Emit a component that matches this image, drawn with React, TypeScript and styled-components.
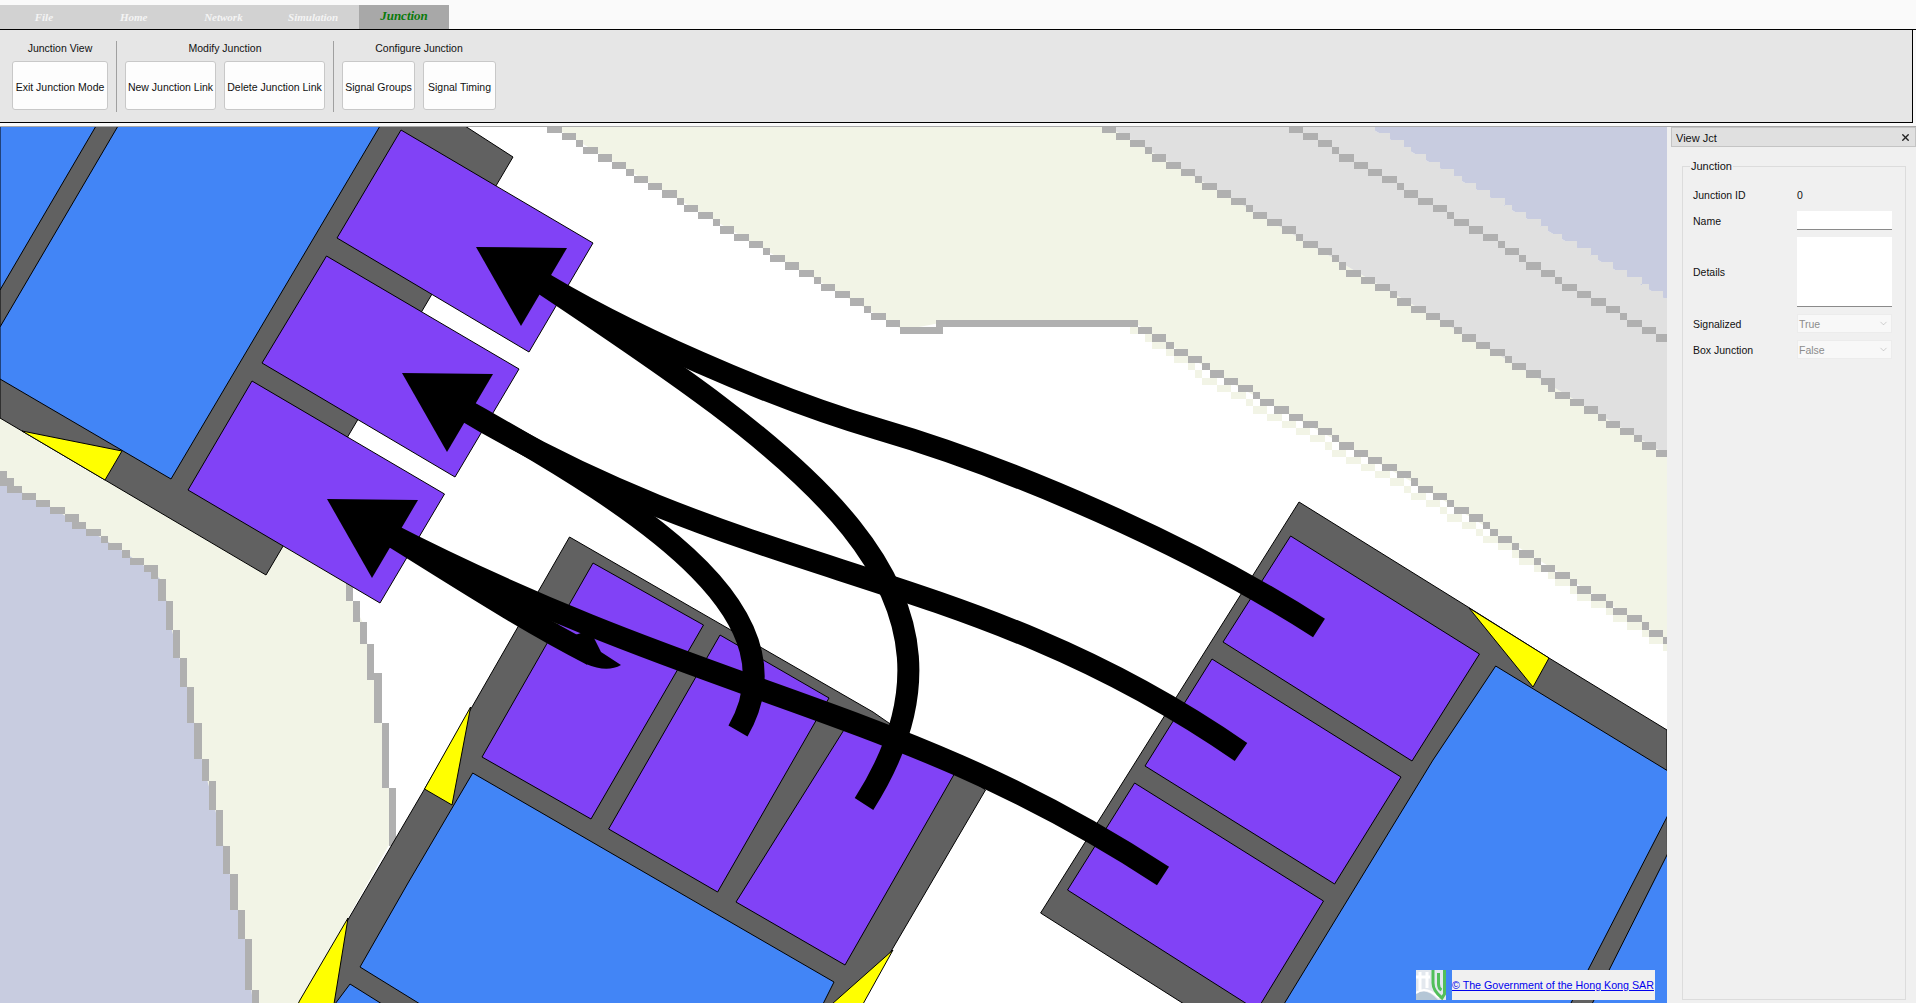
import styled, { createGlobalStyle } from "styled-components";
import { ChevronDown, X } from "lucide-react";

type Pt = [number, number];

const GlobalStyle = createGlobalStyle`
  html, body {
    margin: 0;
    padding: 0;
    background: #fafafa;
    overflow: hidden;
  }
`;

const Page = styled.div`
  width: 1916px;
  height: 1003px;
  display: flex;
  flex-direction: column;
  overflow: hidden;
  font-family: "Liberation Sans", Arial, sans-serif;
  font-size: 10.5px;
  color: #111;
`;

const TabBar = styled.div`
  display: flex;
  height: 24px;
  margin-top: 5px;
  background: #fafafa;
  border-bottom: 1px solid #000;
`;

const Tab = styled.div<{ $active?: boolean }>`
  width: ${(p) => (p.$active ? "90px" : "89.75px")};
  display: flex;
  align-items: center;
  justify-content: center;
  background: ${(p) => (p.$active ? "#a8a8a8" : "#d2d2d2")};
  color: ${(p) => (p.$active ? "#0a7a0a" : "#f4f4f4")};
  font-family: "Liberation Serif", "Times New Roman", serif;
  font-style: italic;
  font-weight: bold;
  font-size: ${(p) => (p.$active ? "13px" : "11px")};
  padding: ${(p) => (p.$active ? "0 0 2px 0" : "0 2px 0 0")};
  box-sizing: border-box;
`;

const Ribbon = styled.div`
  height: 93px;
  flex-shrink: 0;
  box-sizing: border-box;
  background: #e6e6e6;
  border-bottom: 1px solid #000;
  border-right: 1px solid #000;
  margin-right: 3px;
  display: flex;
  padding: 11px 0 0 12px;
`;

const RibbonGroup = styled.div`
  display: flex;
  flex-direction: column;
  align-items: center;
`;

const GroupTitle = styled.div`
  height: 20px;
  line-height: 14px;
  white-space: nowrap;
`;

const ButtonRow = styled.div`
  display: flex;
  gap: 8px;
`;

const RibbonButton = styled.div<{ $width: number }>`
  width: ${(p) => p.$width}px;
  height: 49px;
  box-sizing: border-box;
  padding-top: 2px;
  background: #fdfdfd;
  border: 1px solid #c8c8c8;
  border-radius: 3px;
  display: flex;
  align-items: center;
  justify-content: center;
  white-space: nowrap;
`;

const Separator = styled.div`
  width: 1px;
  height: 71px;
  background: #a0a0a0;
  margin: 0 8px;
`;

const Body = styled.div`
  flex: 1;
  display: flex;
  margin-top: 3px;
  border-top: 1px solid #a9a9a9;
  min-height: 0;
`;

const MapArea = styled.div`
  position: relative;
  width: 1667px;
  height: 876px;
  flex-shrink: 0;
  background: #fff;
  overflow: hidden;
`;

const MapSvg = styled.svg`
  display: block;
`;

const Land = styled.polygon<{ $fill: string }>`
  fill: ${(p) => p.$fill};
`;

const Pixels = styled.path<{ $fill: string }>`
  fill: ${(p) => p.$fill};
  shape-rendering: crispEdges;
`;

const Patch = styled.polygon<{ $fill: string }>`
  fill: ${(p) => p.$fill};
  stroke: #000;
  stroke-width: 1;
  stroke-linejoin: miter;
`;

const Shaft = styled.path`
  fill: none;
  stroke: #000;
  stroke-width: 22;
  stroke-linecap: butt;
`;

const HookTip = styled.path`
  fill: #000;
`;

const Head = styled.polygon`
  fill: #000;
`;

const Credit = styled.div`
  position: absolute;
  left: 1416px;
  bottom: 3px;
  display: flex;
  gap: 6px;
`;

const CreditLogo = styled.svg`
  display: block;
`;

const CreditLink = styled.a`
  width: 203px;
  height: 30px;
  background: #f0f0f0;
  color: #0000ee;
  text-decoration: underline;
  display: flex;
  align-items: center;
  white-space: nowrap;
  font-size: 10.7px;
`;

const Dock = styled.div`
  flex: 1;
  background: #f0f0f0;
  padding: 0 0 0 4px;
  display: flex;
  flex-direction: column;
  min-height: 0;
`;

const DockTitle = styled.div`
  height: 20px;
  flex-shrink: 0;
  box-sizing: border-box;
  background: #e0e0e0;
  border: 1px solid #c4c4c4;
  display: flex;
  align-items: center;
  justify-content: space-between;
  padding: 1px 4px 0 4px;
  font-size: 11px;
`;

const DockBody = styled.div`
  flex: 1;
  min-height: 0;
  padding: 13px 10px 0 11px;
`;

const GroupBox = styled.fieldset`
  margin: 0;
  height: 840px;
  box-sizing: border-box;
  border: 1px solid #dcdcdc;
  padding: 13px 12px 0 10px;
`;

const GroupLegend = styled.legend`
  margin-left: -3px;
  padding: 0 1px;
  font-size: 11px;
  line-height: 12px;
`;

const FormGrid = styled.div`
  display: grid;
  grid-template-columns: 104px 95px;
  grid-template-rows: 19px 19px 70px 19px 19px;
  row-gap: 7px;
  align-items: center;
`;

const TextBox = styled.div`
  height: 100%;
  box-sizing: border-box;
  background: #fff;
  border-bottom: 1px solid #8a8a8a;
`;

const ComboBox = styled.div`
  height: 100%;
  box-sizing: border-box;
  background: #f8f8f8;
  color: #8c8c8c;
  border: 1px solid #ececec;
  display: flex;
  align-items: center;
  justify-content: space-between;
  padding: 0 2px 0 1px;
`;

// rough pixel stair of the background map layer, it is a low res raster in the app
const CELL = 7.2;
const GRID_Y = 3.2;
function pixelLine(points: Pt[], dx = 0, dy = 0): string {
  const seen = new Set<string>();
  let d = "";
  for (let i = 0; i < points.length - 1; i++) {
    const [x0, y0] = points[i];
    const [x1, y1] = points[i + 1];
    const steps = Math.max(1, Math.ceil(Math.max(Math.abs(x1 - x0), Math.abs(y1 - y0)) / CELL));
    for (let s = 0; s <= steps; s++) {
      const x = x0 + ((x1 - x0) * s) / steps + dx;
      const y = y0 + ((y1 - y0) * s) / steps + dy;
      const cx = Math.floor(x / CELL);
      const cy = Math.floor((y - GRID_Y) / CELL);
      const key = cx + "," + cy;
      if (seen.has(key)) continue;
      seen.add(key);
      d += `M${cx * CELL} ${cy * CELL + GRID_Y}h${CELL}v${CELL}h${-CELL}z`;
    }
  }
  return d;
}

const pts = (p: Pt[]) => p.map((q) => q.join(",")).join(" ");

const WATER = "#c8cce0";
const BEIGE = "#f2f4e6";
const GREY = "#e0e0e0";
const LINE = "#b0b0b0";
const ROAD = "#616161";
const BLUE = "#4285f6";
const PURPLE = "#8142f6";
const YELLOW = "#ffff00";

const leftEdge: Pt[] = [[0, 473], [8, 485], [59, 512], [118, 548], [153, 572], [163, 582], [171, 627], [188, 690], [200, 753], [216, 813], [231, 880], [245, 940], [253, 1003]];
const leftRoadEdge: Pt[] = [[347, 585], [353, 603], [363, 623], [375, 680], [382, 727], [390, 797], [390, 843]];
const topLower: Pt[] = [[552, 127], [903, 330], [939, 330], [940, 323], [1135, 323], [1226, 380], [1427, 490], [1667, 640]];
const lineA: Pt[] = [[1107, 126], [1234, 200], [1444, 323], [1555, 388], [1667, 455]];
const lineB: Pt[] = [[1295, 126], [1470, 228], [1667, 340]];
const waterEdge: Pt[] = [[1367, 126], [1667, 300]];

const roads: Pt[][] = [
  [[465, 126], [513, 157], [266, 575], [22, 431], [0, 418], [0, 126]],
  [[569.5, 537], [873, 712], [985.5, 790], [893, 948], [860, 1004], [300, 1004], [349, 918], [424, 790], [472, 707]],
  [[1299, 502], [1468, 607], [1549, 658], [1667, 730], [1668, 1004], [1184, 1004], [1040.6, 913]],
];

const blues: Pt[][] = [
  [[380, 126], [171, 479], [0, 379], [0, 327], [118, 126]],
  [[0, 126], [96, 126], [0, 290]],
  [[472.7, 773], [834, 982], [823, 1004], [420, 1004], [360, 967], [408, 883]],
  [[350, 984], [382, 1004], [335, 1004]],
  [[1495.7, 666], [1668, 771], [1668, 815], [1570.5, 1004], [1284, 1004], [1433, 760]],
  [[1668, 853], [1592, 1004], [1668, 1004]],
];

const purples: Pt[][] = [
  [[401, 130], [593, 243], [529, 352], [337, 238]],
  [[326.5, 256], [519, 369], [455, 477], [262, 363]],
  [[252, 381], [444.5, 494], [380, 603], [188, 490]],
  [[593, 563], [703.5, 625], [591, 819], [482, 757]],
  [[720, 635], [829, 698], [717.6, 892], [608.6, 829]],
  [[852, 717], [956, 771], [845, 965], [736, 902]],
  [[1290.6, 536], [1479.5, 654], [1412, 761], [1223, 642]],
  [[1212, 659], [1401, 777], [1334.6, 884], [1145, 766]],
  [[1134.6, 783], [1323.5, 901], [1260.7, 1004], [1247, 1004], [1067.5, 890]],
];

const yellows: Pt[][] = [
  [[22, 431], [122, 451], [105, 480]],
  [[470.6, 707], [424.5, 789], [452, 805]],
  [[348, 918], [300, 1000], [298, 1004], [334, 1004]],
  [[893, 950], [832, 1004], [863, 1004]],
  [[1469, 608], [1549, 658], [1533, 687]],
];

const heads: Pt[][] = [
  [[476, 247], [567, 248], [521, 326]],
  [[402, 373], [493, 374], [447, 452]],
  [[327, 499], [418, 500], [372, 578]],
];

// junction links
const shafts = [
  "M1319 628C1190 545 1012 468 878 429C772 398 623 333 530 275",
  "M1241 752C968 563 750 585 456 405",
  "M1163 876C898 703 718 703 382 530",
  "M864 804C1000 590 805 458 530 275",
  "M738 731C802 620 665 520 456 405",
  "M382 530C450 572 520 618 592 655",
];

export default function App() {
  return (
    <Page>
      <GlobalStyle />
      <TabBar>
        <Tab>File</Tab>
        <Tab>Home</Tab>
        <Tab>Network</Tab>
        <Tab>Simulation</Tab>
        <Tab $active>Junction</Tab>
      </TabBar>
      <Ribbon>
        <RibbonGroup>
          <GroupTitle>Junction View</GroupTitle>
          <ButtonRow>
            <RibbonButton $width={96}>Exit Junction Mode</RibbonButton>
          </ButtonRow>
        </RibbonGroup>
        <Separator />
        <RibbonGroup>
          <GroupTitle>Modify Junction</GroupTitle>
          <ButtonRow>
            <RibbonButton $width={91}>New Junction Link</RibbonButton>
            <RibbonButton $width={101}>Delete Junction Link</RibbonButton>
          </ButtonRow>
        </RibbonGroup>
        <Separator />
        <RibbonGroup>
          <GroupTitle>Configure Junction</GroupTitle>
          <ButtonRow>
            <RibbonButton $width={73}>Signal Groups</RibbonButton>
            <RibbonButton $width={73}>Signal Timing</RibbonButton>
          </ButtonRow>
        </RibbonGroup>
      </Ribbon>
      <Body>
        <MapArea>
          <MapSvg width="1667" height="876" viewBox="0 127 1667 876">
            <Land $fill={BEIGE} points={pts([[552, 126], ...lineA, [1667, 640], [1427, 490], [1226, 380], [1135, 323], [940, 323], [903, 330]])} />
            <Land $fill={GREY} points={pts([[1107, 126], [1367, 126], [1667, 300], [1667, 455], [1555, 388], [1444, 323], [1234, 200]])} />
            <Land $fill={WATER} points={pts([[1367, 126], [1667, 126], [1667, 300]])} />
            <Pixels $fill={GREY} d={pixelLine(waterEdge)} />
            <Land $fill={BEIGE} points={pts([[0, 400], [300, 500], ...leftRoadEdge, [300, 1003], [0, 1003]])} />
            <Land $fill={WATER} points={pts([...leftEdge, [0, 1003]])} />
            <Pixels $fill={BEIGE} d={pixelLine(topLower.slice(4), -3, 7)} />
            <Pixels $fill={LINE} d={pixelLine(topLower)} />
            <Pixels $fill={LINE} d={pixelLine(lineA)} />
            <Pixels $fill={LINE} d={pixelLine(lineB)} />
            <Pixels $fill={LINE} d={pixelLine(leftEdge)} />
            <Pixels $fill={LINE} d={pixelLine(leftRoadEdge)} />
            {roads.map((r, i) => (
              <Patch key={i} $fill={ROAD} points={pts(r)} />
            ))}
            {blues.map((r, i) => (
              <Patch key={i} $fill={BLUE} points={pts(r)} />
            ))}
            {purples.map((r, i) => (
              <Patch key={i} $fill={PURPLE} points={pts(r)} />
            ))}
            {yellows.map((r, i) => (
              <Patch key={i} $fill={YELLOW} points={pts(r)} />
            ))}
            {shafts.map((d, i) => (
              <Shaft key={i} d={d} />
            ))}
            <HookTip d="M586 664Q607 673 621 665L601 652L590 630L575 635Z" />
            {heads.map((h, i) => (
              <Head key={i} points={pts(h)} />
            ))}
          </MapSvg>
          <Credit>
            <CreditLogo width="30" height="30" viewBox="0 0 30 30">
              <rect width="30" height="30" fill="#e3e8ee" />
              <path d="M0 30V24Q10 17 22 30z" fill="#b4c6d6" />
              <path d="M0 23Q10 15 23 28" stroke="#fff" strokeWidth="2" fill="none" />
              <path d="M4 2v18M11 2v16M0 7h14" stroke="#fff" strokeWidth="3" fill="none" />
              <path d="M17 0v13c0 7 4 11 9 15l2.500-4V0" stroke="#52bf5a" strokeWidth="3" fill="none" />
              <path d="M22.500 3v11c0 3 1 5 3 6" stroke="#52bf5a" strokeWidth="3" fill="none" />
            </CreditLogo>
            <CreditLink href="#">© The Government of the Hong Kong SAR</CreditLink>
          </Credit>
        </MapArea>
        <Dock>
          <DockTitle>
            View Jct
            <X size={11} strokeWidth={3} color="#222" />
          </DockTitle>
          <DockBody>
            <GroupBox>
              <GroupLegend>Junction</GroupLegend>
              <FormGrid>
                <span>Junction ID</span>
                <span>0</span>
                <span>Name</span>
                <TextBox />
                <span>Details</span>
                <TextBox />
                <span>Signalized</span>
                <ComboBox>
                  True
                  <ChevronDown size={11} strokeWidth={1} color="#9a9a9a" />
                </ComboBox>
                <span>Box Junction</span>
                <ComboBox>
                  False
                  <ChevronDown size={11} strokeWidth={1} color="#9a9a9a" />
                </ComboBox>
              </FormGrid>
            </GroupBox>
          </DockBody>
        </Dock>
      </Body>
    </Page>
  );
}
